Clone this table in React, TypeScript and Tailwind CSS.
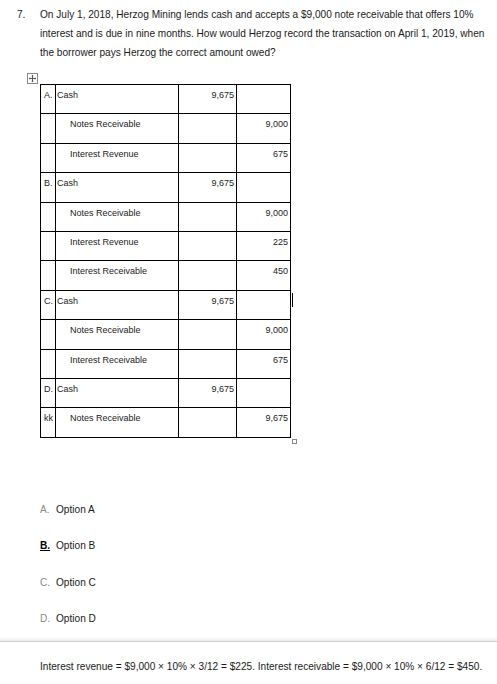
import type { ReactNode } from 'react';

interface Row {
  label: string;
  account: string;
  indent: boolean;
  debit: string;
  credit: string;
}

const rows: Row[] = [
  { label: 'A.', account: 'Cash', indent: false, debit: '9,675', credit: '' },
  { label: '', account: 'Notes Receivable', indent: true, debit: '', credit: '9,000' },
  { label: '', account: 'Interest Revenue', indent: true, debit: '', credit: '675' },
  { label: 'B.', account: 'Cash', indent: false, debit: '9,675', credit: '' },
  { label: '', account: 'Notes Receivable', indent: true, debit: '', credit: '9,000' },
  { label: '', account: 'Interest Revenue', indent: true, debit: '', credit: '225' },
  { label: '', account: 'Interest Receivable', indent: true, debit: '', credit: '450' },
  { label: 'C.', account: 'Cash', indent: false, debit: '9,675', credit: '' },
  { label: '', account: 'Notes Receivable', indent: true, debit: '', credit: '9,000' },
  { label: '', account: 'Interest Receivable', indent: true, debit: '', credit: '675' },
  { label: 'D.', account: 'Cash', indent: false, debit: '9,675', credit: '' },
  { label: 'kk', account: 'Notes Receivable', indent: true, debit: '', credit: '9,675' },
];

const options = [
  { letter: 'A.', text: 'Option A', picked: false },
  { letter: 'B.', text: 'Option B', picked: true },
  { letter: 'C.', text: 'Option C', picked: false },
  { letter: 'D.', text: 'Option D', picked: false },
];

function MoveHandle() {
  return (
    <svg width="11" height="11" viewBox="0 0 11 11" className="block">
      <rect x="0.5" y="0.5" width="10" height="10" fill="white" stroke="#8a8a8a" />
      <path d="M5.5 2v7M2 5.5h7" stroke="#555" strokeWidth="1" />
      <path d="M5.5 1.8l-1.2 1.4h2.4zM5.5 9.2l-1.2-1.4h2.4zM1.8 5.5l1.4-1.2v2.4zM9.2 5.5l-1.4-1.2v2.4z" fill="#555" />
    </svg>
  );
}

function Cell({ children, className = '' }: { children?: ReactNode; className?: string }) {
  return (
    <td className={`border border-black align-top h-[29.4px] pt-[4px] leading-[12px] ${className}`}>
      {children}
    </td>
  );
}

export default function App() {
  return (
    <div className="w-[497px] h-[684px] bg-white text-[#1a1a1a] font-['Liberation_Sans',Arial,sans-serif] overflow-hidden">
      {/* Question */}
      <div className="flex pt-[5px] text-[10.1px] leading-[19px]">
        <span className="w-[23px] pl-[17px] shrink-0 box-content">7.</span>
        <p className="w-[452px]">
          On July 1, 2018, Herzog Mining lends cash and accepts a $9,000 note receivable that offers 10% interest and
          is due in nine months. How would Herzog record the transaction on April 1, 2019, when the borrower pays
          Herzog the correct amount owed?
        </p>
      </div>

      {/* Journal table */}
      <div className="mt-[11px] pl-[27px]">
        <MoveHandle />
      </div>
      <div className="relative ml-[40px] w-[251px]">
        <table className="border-collapse w-[251px] table-fixed text-[9px] text-[#222]">
          <colgroup>
            <col className="w-[15px]" />
            <col className="w-[123px]" />
            <col className="w-[58px]" />
            <col className="w-[54px]" />
          </colgroup>
          <tbody>
            {rows.map((r, i) => (
              <tr key={i}>
                <Cell className="pl-[3px]">{r.label}</Cell>
                <Cell className={r.indent ? 'pl-[14px]' : 'pl-[1px]'}>{r.account}</Cell>
                <Cell className="text-right pr-[2px]">{r.debit}</Cell>
                <Cell className="text-right pr-[2px]">{r.credit}</Cell>
              </tr>
            ))}
          </tbody>
        </table>
        {/* text cursor next to row C */}
        <div className="absolute left-[252px] top-[209px] w-[1px] h-[14px] bg-black" />
        {/* resize handle */}
        <div className="absolute left-[252px] top-[355px] w-[5px] h-[5px] border border-[#888] bg-white" />
      </div>

      {/* Options */}
      <div className="mt-[66px] pl-[40px] flex flex-col gap-[24.5px] text-[10.1px] leading-[12px]">
        {options.map((o) => (
          <div key={o.letter} className="flex">
            <span
              className={`w-[16px] ${o.picked ? 'font-bold underline text-black' : 'text-[#8a8a8a]'}`}
            >
              {o.letter}
            </span>
            <span className="text-[#1a1a1a]">{o.text}</span>
          </div>
        ))}
      </div>

      {/* Explanation */}
      <div className="mt-[12px] h-[4px] bg-gradient-to-b from-white to-[#ededed]" />
      <div className="border-t border-[#cfcfcf] pt-[19px] pl-[40px] text-[10.1px] leading-[12px]">
        Interest revenue = $9,000 × 10% × 3/12 = $225. Interest receivable = $9,000 × 10% × 6/12 = $450.
      </div>
    </div>
  );
}
